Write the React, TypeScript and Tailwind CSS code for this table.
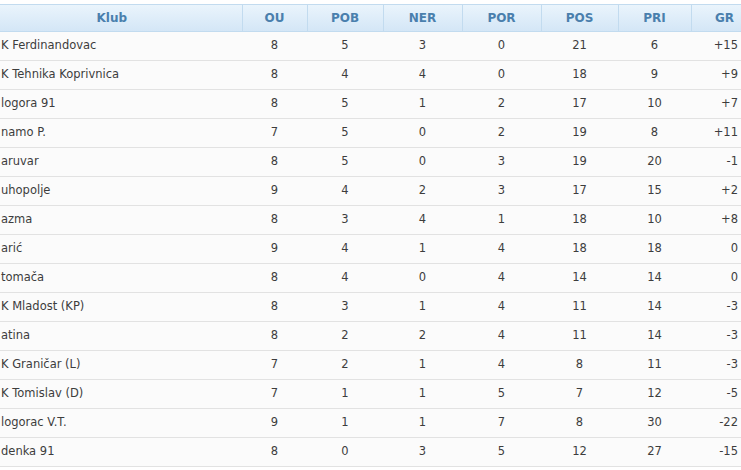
const COLS = ['Klub', 'OU', 'POB', 'NER', 'POR', 'POS', 'PRI', 'GR'];
const WIDTHS = [242, 65, 76, 79, 79, 77, 73, 59];

type Row = [string, number, number, number, number, number, number, string];

// visible part of the club names, as cut off at the left edge
const ROWS: Row[] = [
  ['K Ferdinandovac', 8, 5, 3, 0, 21, 6, '+15'],
  ['K Tehnika Koprivnica', 8, 4, 4, 0, 18, 9, '+9'],
  ['logora 91', 8, 5, 1, 2, 17, 10, '+7'],
  ['namo P.', 7, 5, 0, 2, 19, 8, '+11'],
  ['aruvar', 8, 5, 0, 3, 19, 20, '-1'],
  ['uhopolje', 9, 4, 2, 3, 17, 15, '+2'],
  ['azma', 8, 3, 4, 1, 18, 10, '+8'],
  ['arić', 9, 4, 1, 4, 18, 18, '0'],
  ['tomača', 8, 4, 0, 4, 14, 14, '0'],
  ['K Mladost (KP)', 8, 3, 1, 4, 11, 14, '-3'],
  ['atina', 8, 2, 2, 4, 11, 14, '-3'],
  ['K Graničar (L)', 7, 2, 1, 4, 8, 11, '-3'],
  ['K Tomislav (D)', 7, 1, 1, 5, 7, 12, '-5'],
  ['logorac V.T.', 9, 1, 1, 7, 8, 30, '-22'],
  ['denka 91', 8, 0, 3, 5, 12, 27, '-15'],
];

const TH = 'border border-[#c2dbef] p-0 text-center font-bold text-[12px] text-[#4a7fad]';

export default function App() {
  return (
    <div
      className="w-[741px] h-[470px] overflow-hidden bg-white pt-[4px] text-[11.5px] text-[#3d3d3d]"
      style={{ fontFamily: "'DejaVu Sans', Verdana, sans-serif" }}
    >
      <table className="w-[750px] table-fixed border-collapse bg-[#fbfbfb]">
        <colgroup>
          {WIDTHS.map((w, i) => (
            <col key={i} style={{ width: w }} />
          ))}
        </colgroup>
        <thead>
          <tr className="h-[27px] bg-gradient-to-b from-[#eaf4fc] to-[#d3e6f6]">
            <th className={`${TH} border-l-0 pr-[18px]`}>Klub</th>
            {COLS.slice(1, 7).map((c) => (
              <th key={c} className={TH}>
                {c}
              </th>
            ))}
            <th className={`${TH} pl-[8px]`}>GR</th>
          </tr>
        </thead>
        <tbody>
          {ROWS.map((r) => (
            <tr key={r[0]} className="h-[29px] border-b border-[#e2e2e2]">
              <td className="pl-[1px] text-left whitespace-nowrap">{r[0]}</td>
              {r.slice(1, 7).map((v, i) => (
                <td key={i} className="p-0 text-center">
                  {v}
                </td>
              ))}
              <td className="pr-[12px] text-right">{r[7]}</td>
            </tr>
          ))}
        </tbody>
      </table>
    </div>
  );
}
